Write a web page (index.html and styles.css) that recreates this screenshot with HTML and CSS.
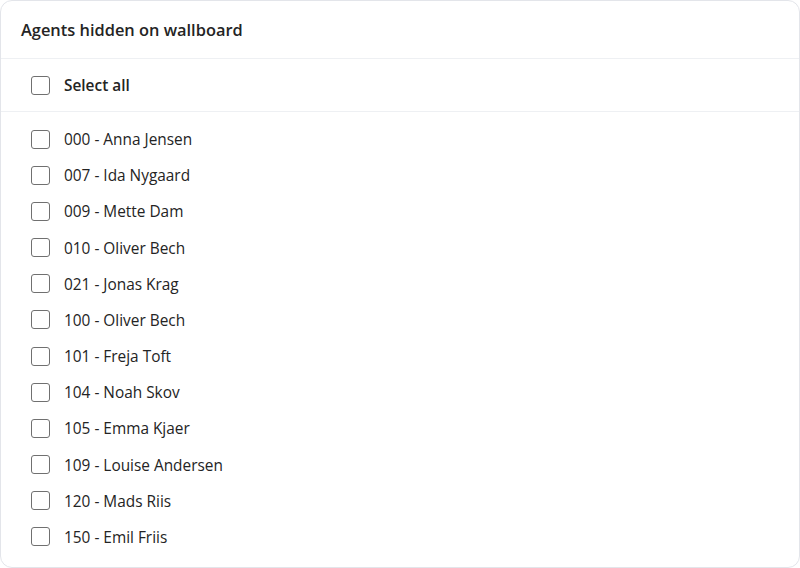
FILE: index.html
```html
<!DOCTYPE html>
<html>
<head>
<meta charset="utf-8">
<link rel="stylesheet" href="styles.css">
</head>
<body>
<div class="card">
  <div class="header">Agents hidden on wallboard</div>
  <label class="row select-all"><span class="box"></span><span class="label bold">Select all</span></label>
  <div class="list">
    <label class="row"><span class="box"></span><span class="label">000 - Anna Jensen</span></label>
    <label class="row"><span class="box"></span><span class="label">007 - Ida Nygaard</span></label>
    <label class="row"><span class="box"></span><span class="label">009 - Mette Dam</span></label>
    <label class="row"><span class="box"></span><span class="label">010 - Oliver Bech</span></label>
    <label class="row"><span class="box"></span><span class="label">021 - Jonas Krag</span></label>
    <label class="row"><span class="box"></span><span class="label">100 - Oliver Bech</span></label>
    <label class="row"><span class="box"></span><span class="label">101 - Freja Toft</span></label>
    <label class="row"><span class="box"></span><span class="label">104 - Noah Skov</span></label>
    <label class="row"><span class="box"></span><span class="label">105 - Emma Kjaer</span></label>
    <label class="row"><span class="box"></span><span class="label">109 - Louise Andersen</span></label>
    <label class="row"><span class="box"></span><span class="label">120 - Mads Riis</span></label>
    <label class="row"><span class="box"></span><span class="label">150 - Emil Friis</span></label>
  </div>
</div>
</body>
</html>
```
FILE: styles.css
```css
html, body { margin: 0; padding: 0; background: #ffffff; }
body { font-family: "Open Sans", "Noto Sans", sans-serif; color: #242424; }
.card {
  box-sizing: border-box;
  width: 800px;
  height: 568px;
  border: 1px solid #e3e5ea;
  border-radius: 12px;
  background: #fff;
  overflow: hidden;
}
.header {
  box-sizing: border-box;
  height: 58px;
  padding-left: 20px;
  display: flex;
  align-items: center;
  font-size: 16.4px;
  font-weight: 600;
  border-bottom: 1px solid #eef0f3;
}
.row {
  display: flex;
  align-items: center;
  padding-left: 30px;
  box-sizing: border-box;
  height: 36.18px;
  font-size: 15.4px;
}
.select-all {
  height: 53px;
  border-bottom: 1px solid #eef0f3;
}
.list { padding-top: 9px; }
.box {
  box-sizing: border-box;
  width: 19px;
  height: 19px;
  border: 1px solid #707070;
  border-radius: 3px;
  background: #fff;
  margin-right: 14px;
  flex: none;
}
.label { line-height: 20px; padding-top: 2px; }
.bold { font-weight: 600; }
```
